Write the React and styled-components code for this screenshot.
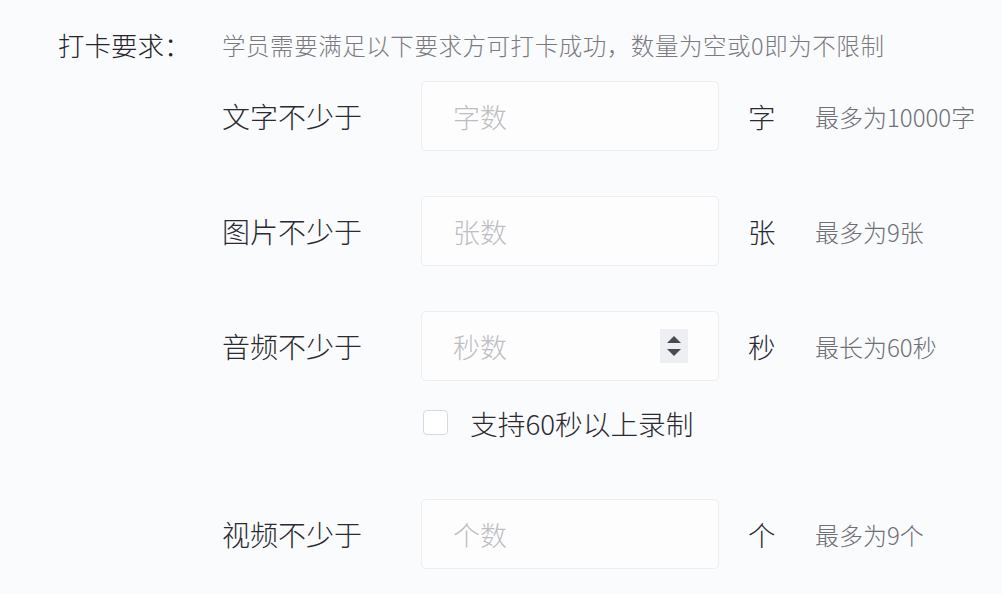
import React from "react";
import styled, { createGlobalStyle } from "styled-components";

const GlobalStyle = createGlobalStyle`
  html, body {
    margin: 0;
    padding: 0;
    background: #fafbfd;
  }
  body {
    font-family: "Noto Sans CJK SC", "Noto Sans", sans-serif;
    font-weight: 300;
    color: #2b2a30;
  }
`;

const Page = styled.div`
  width: 1002px;
  height: 594px;
  overflow: hidden;
  box-sizing: border-box;
  padding: 28px 0 0 58px;
  display: grid;
  grid-template-columns: 164px 1fr;
  align-items: start;
`;

const Title = styled.div`
  font-size: 26.5px;
  line-height: 34px;
  color: #25242b;
  white-space: nowrap;
`;

const Body = styled.div`
  display: flex;
  flex-direction: column;
`;

const Desc = styled.div`
  font-size: 23.5px;
  line-height: 34px;
  color: #7a7a80;
  letter-spacing: 0.55px;
  white-space: nowrap;
  margin-bottom: 19px;
`;

const Row = styled.div`
  display: flex;
  align-items: center;
  height: 70px;
  margin-top: ${(p) => p.$gap || 0}px;
`;

const Label = styled.div`
  width: 199px;
  font-size: 28px;
  color: #2b2a30;
  white-space: nowrap;
`;

const Field = styled.div`
  box-sizing: border-box;
  width: 298px;
  height: 70px;
  display: flex;
  align-items: center;
  padding: 0 30px 0 31px;
  background: #fdfdfe;
  border: 1px solid #eceef1;
  border-radius: 5px;
`;

const Input = styled.input`
  flex: 1;
  min-width: 0;
  border: none;
  outline: none;
  background: transparent;
  padding: 0;
  font-family: inherit;
  font-weight: 300;
  font-size: 27px;
  color: #333;
  &::placeholder {
    color: #bdbdc2;
  }
`;

const Spinner = styled.div`
  width: 28px;
  height: 34px;
  background: #eeeff2;
  display: flex;
  flex-direction: column;
  align-items: center;
  justify-content: center;
  gap: 6px;
`;

const Unit = styled.div`
  width: 67px;
  margin-left: 29px;
  font-size: 27.5px;
  color: #2b2a30;
`;

const Hint = styled.div`
  font-size: 24px;
  color: #6f6f75;
  white-space: nowrap;
`;

const CheckRow = styled.label`
  display: flex;
  align-items: center;
  height: 25px;
  margin: 29px 0 0 201px;
  gap: 22px;
  cursor: pointer;
`;

const Box = styled.span`
  width: 25px;
  height: 25px;
  box-sizing: border-box;
  border: 1px solid #d8d9de;
  border-radius: 4px;
  background: #fff;
`;

const CheckText = styled.span`
  font-size: 27.7px;
  color: #2b2a30;
  white-space: nowrap;
`;

const Arrow = ({ up }) => (
  <svg width="14" height="7" viewBox="0 0 14 7">
    <path d={up ? "M7 0 L14 7 L0 7 Z" : "M0 0 L14 0 L7 7 Z"} fill="#4a4a4f" />
  </svg>
);

const rows = [
  { label: "文字不少于", placeholder: "字数", unit: "字", hint: "最多为10000字" },
  { label: "图片不少于", placeholder: "张数", unit: "张", hint: "最多为9张", gap: 45 },
  { label: "音频不少于", placeholder: "秒数", unit: "秒", hint: "最长为60秒", gap: 45, spin: true },
];

const FieldRow = ({ label, placeholder, unit, hint, gap, spin }) => (
  <Row $gap={gap}>
    <Label>{label}</Label>
    <Field>
      <Input placeholder={placeholder} />
      {spin && (
        <Spinner>
          <Arrow up />
          <Arrow />
        </Spinner>
      )}
    </Field>
    <Unit>{unit}</Unit>
    <Hint>{hint}</Hint>
  </Row>
);

export default function App() {
  return (
    <>
      <GlobalStyle />
      <Page>
        <Title>打卡要求：</Title>
        <Body>
          <Desc>学员需要满足以下要求方可打卡成功，数量为空或0即为不限制</Desc>
          {rows.map((r) => (
            <FieldRow key={r.label} {...r} />
          ))}
          <CheckRow>
            <Box />
            <CheckText>支持60秒以上录制</CheckText>
          </CheckRow>
          <FieldRow label="视频不少于" placeholder="个数" unit="个" hint="最多为9个" gap={64} />
        </Body>
      </Page>
    </>
  );
}
